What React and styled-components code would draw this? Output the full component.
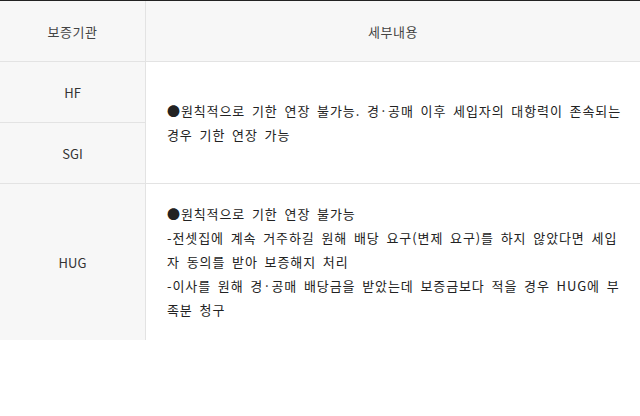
import React from "react";
import styled, { createGlobalStyle } from "styled-components";

const GlobalStyle = createGlobalStyle`
  html, body {
    margin: 0;
    padding: 0;
    background: #fff;
  }
  body {
    font-family: "Noto Sans CJK KR", "Noto Sans", sans-serif;
    font-size: 13px;
    color: #333;
  }
`;

const Table = styled.div`
  display: grid;
  grid-template-columns: 146px 1fr;
  grid-template-rows: 61px 61px 61px 156px;
  border-top: 1px solid #222;
  width: 640px;
`;

const HeadCell = styled.div`
  box-sizing: border-box;
  display: flex;
  align-items: center;
  justify-content: center;
  background: #f7f7f7;
  border-bottom: 1px solid #e3e3e3;
  border-right: ${(p) => (p.$first ? "1px solid #e3e3e3" : "none")};
  color: #444;
  letter-spacing: 0.5px;
`;

const AgencyCell = styled.div`
  box-sizing: border-box;
  display: flex;
  align-items: center;
  justify-content: center;
  background: #f7f7f7;
  border-right: 1px solid #e3e3e3;
  border-bottom: ${(p) => (p.$last ? "none" : "1px solid #e3e3e3")};
  color: #333;
`;

const DetailCell = styled.div`
  box-sizing: border-box;
  display: flex;
  flex-direction: column;
  justify-content: center;
  padding: 0 10px 0 21px;
  grid-row: span ${(p) => p.$span || 1};
  border-bottom: ${(p) => (p.$last ? "none" : "1px solid #e3e3e3")};
  line-height: 24px;
  letter-spacing: 0.9px;
  word-spacing: 3px;
  color: #222;
`;

const Line = styled.div`
  white-space: nowrap;
`;

export default function App() {
  return (
    <>
      <GlobalStyle />
      <Table>
        <HeadCell $first>보증기관</HeadCell>
        <HeadCell>세부내용</HeadCell>

        <AgencyCell>HF</AgencyCell>
        <DetailCell $span={2}>
          <Line>●원칙적으로 기한 연장 불가능. 경·공매 이후 세입자의 대항력이 존속되는</Line>
          <Line>경우 기한 연장 가능</Line>
        </DetailCell>
        <AgencyCell>SGI</AgencyCell>

        <AgencyCell $last>HUG</AgencyCell>
        <DetailCell $last>
          <Line>●원칙적으로 기한 연장 불가능</Line>
          <Line>-전셋집에 계속 거주하길 원해 배당 요구(변제 요구)를 하지 않았다면 세입</Line>
          <Line>자 동의를 받아 보증해지 처리</Line>
          <Line>-이사를 원해 경·공매 배당금을 받았는데 보증금보다 적을 경우 HUG에 부</Line>
          <Line>족분 청구</Line>
        </DetailCell>
      </Table>
    </>
  );
}
